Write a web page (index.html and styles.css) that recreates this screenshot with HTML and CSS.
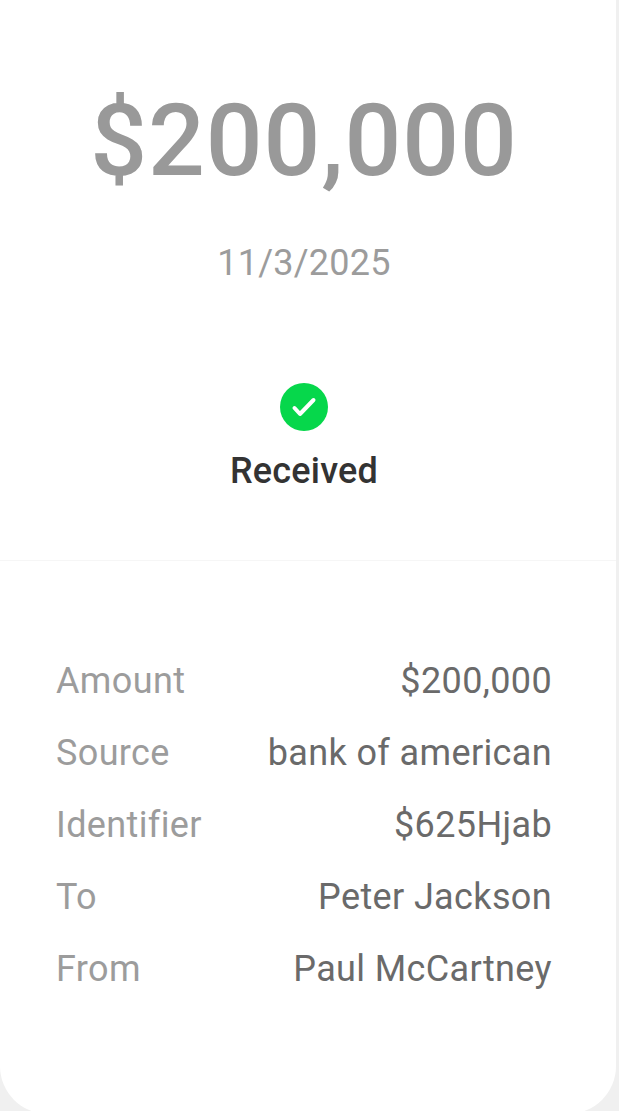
FILE: index.html
```html
<!DOCTYPE html>
<html lang="en">

<head>
	<meta charset="UTF-8">
	<meta name="viewport" content="width=device-width, initial-scale=1.0">
	<title>Payment received</title>
	<link rel="stylesheet" href="styles.css">
</head>

<body>
	<div class="card">
		<div class="summary">
			<div class="amount">$200,000</div>
			<div class="date">11/3/2025</div>
			<svg class="status-icon" width="48" height="48" viewBox="0 0 48 48">
				<circle cx="24" cy="24" r="24" fill="#06d74b"/>
				<path d="M14.5 25l5.5 6 13.5-14" fill="none" stroke="#fff" stroke-width="4" stroke-linecap="round" stroke-linejoin="round"/>
			</svg>
			<div class="status">Received</div>
		</div>
		<div class="details">
			<div class="row"><span class="label">Amount</span><span class="value">$200,000</span></div>
			<div class="row"><span class="label">Source</span><span class="value">bank of american</span></div>
			<div class="row"><span class="label">Identifier</span><span class="value">$625Hjab</span></div>
			<div class="row"><span class="label">To</span><span class="value">Peter Jackson</span></div>
			<div class="row"><span class="label">From</span><span class="value">Paul McCartney</span></div>
		</div>
	</div>
</body>

</html>
```

FILE: styles.css
```css
body
{
	font-family: 'Roboto', sans-serif;
	background-color: #f0f0f0;
	margin: 0;
	height: 1111px;
	overflow: hidden;
}

.card
{
	background-color: #fff;
	width: 616px;
	height: 1114px;
	border-radius: 0 0 48px 48px;
}

.summary
{
	display: flex;
	flex-direction: column;
	align-items: center;
	height: 561px;
	padding-top: 86px;
	padding-right: 8px;
	box-sizing: border-box;
	border-bottom: 1px solid #f6f6f6;
}

.amount
{
	font-size: 100px;
	font-weight: 500;
	letter-spacing: 0.9px;
	line-height: 110px;
	color: #999;
}

.date
{
	margin-top: 43px;
	font-size: 36px;
	letter-spacing: 0.25px;
	line-height: 48px;
	color: #9c9c9c;
}

.status-icon
{
	margin-top: 96px;
}

.status
{
	margin-top: 16px;
	font-size: 36px;
	font-weight: 500;
	letter-spacing: 0.2px;
	line-height: 48px;
	color: #333;
}

.details
{
	padding: 84px 64px 0 56px;
}

.row
{
	display: flex;
	justify-content: space-between;
	font-size: 36px;
	letter-spacing: 0.37px;
	line-height: 72px;
}

.label
{
	color: #9c9c9c;
}

.value
{
	color: #6a6a6a;
}
```
